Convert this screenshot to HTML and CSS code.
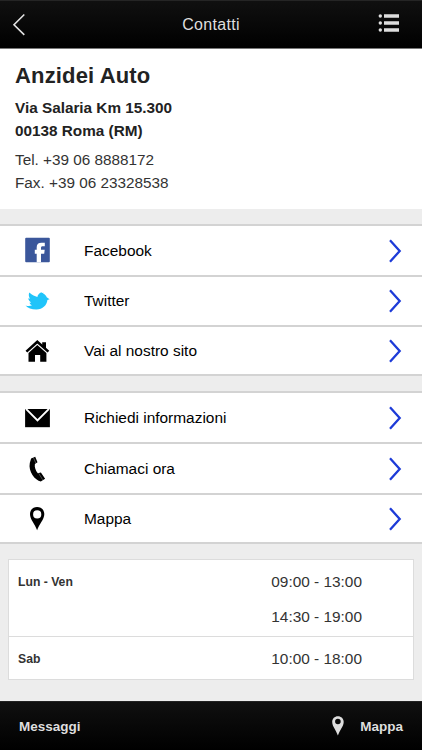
FILE: index.html
```html
<!DOCTYPE html>
<html lang="it">
<head>
<meta charset="utf-8">
<title>Contatti</title>
<link rel="stylesheet" href="styles.css">
</head>
<body>
<header class="bar top">
  <svg class="back" width="14" height="24" viewBox="0 0 14 24"><path d="M12.3 1.5 2 11.7 12.3 21.9"/></svg>
  <h1>Contatti</h1>
  <svg class="menu" width="22" height="20" viewBox="0 0 22 20"><circle cx="2.3" cy="3" r="1.7"/><circle cx="2.3" cy="10" r="1.7"/><circle cx="2.3" cy="17" r="1.7"/><path d="M6 1.2h15v3.5H6zM6 8.3h15v3.5H6zM6 15.3h15v3.5H6z"/></svg>
</header>
<section class="address">
  <h2>Anzidei Auto</h2>
  <p class="street"><span>Via Salaria Km 15.300</span><span>00138 Roma (RM)</span></p>
  <p class="phones"><span>Tel. +39 06 8888172</span><span>Fax. +39 06 23328538</span></p>
</section>
<nav class="group">
  <a class="row"><svg class="icon fb" viewBox="0 0 26 26"><rect x=".2" y=".7" width="24.6" height="24.6" rx="1" fill="#3b579b"/><path d="M11.7 25.3v-8.6H9.8v-3.9h1.9v-2.6c0-3.1 1.8-4.5 4.8-4.5h3.3v3.6h-2c-1.4 0-1.8.6-1.8 1.8v1.7h3.7l-.5 3.9H16v8.6z" fill="#fff"/></svg><span class="label">Facebook</span><svg class="arrow" viewBox="0 0 14 24"><path d="M2 1.2l9.7 10.8L2 22.8"/></svg></a>
  <a class="row mid"><svg class="icon" viewBox="0 0 26 26"><path d="M.5 17.4C3.4 18.6 5.2 18.1 7 17.3 5.4 16.8 5 16 4.5 14.8L6.2 14.5C4.4 13.4 3.4 11.9 3.3 10.3L5 10.7C3.8 9 3.4 6.7 4.3 4.6C7.3 7.2 9.8 8.2 12.4 9.1C12.6 7.2 14.2 5.1 16.5 4.3L17 5L18.5 4.7L18.2 5.8C20.2 6.5 21 7.7 21.7 9.2L24.6 11.2L22.4 12C22 16.9 17.8 21.5 11.3 21.5C6.6 21.5 2.8 20.2.5 17.4Z" fill="#20c4fa"/></svg><span class="label">Twitter</span><svg class="arrow" viewBox="0 0 14 24"><path d="M2 1.2l9.7 10.8L2 22.8"/></svg></a>
  <a class="row last"><svg class="icon" viewBox="0 0 26 26"><path d="M12.3 7.1l9.1 8v8.6h-6.2v-6.8h-5.2v6.8H3.5v-8.6z"/><path d="M1.4 13.6 12.3 3.7 23.4 13.6" fill="none" stroke="#000" stroke-width="2.6"/><path d="M17.2 4.2h3.8v7.5l-3.8-3.3z"/></svg><span class="label">Vai al nostro sito</span><svg class="arrow" viewBox="0 0 14 24"><path d="M2 1.2l9.7 10.8L2 22.8"/></svg></a>
</nav>
<nav class="group">
  <a class="row"><svg class="icon" viewBox="0 0 26 26"><path d="M.1 4h24.8v18.2H.1z"/><path d="M1 3.8 12.5 15.5 24 3.8" fill="none" stroke="#fff" stroke-width="1.9"/></svg><span class="label">Richiedi informazioni</span><svg class="arrow" viewBox="0 0 14 24"><path d="M2 1.2l9.7 10.8L2 22.8"/></svg></a>
  <a class="row"><svg class="icon" viewBox="0 0 26 26"><path d="M6.1 2.4 10.2.8 12.5 6.2 9.9 7.9C9.3 11 10.7 14.5 12.8 17.2L15.9 16.5 20.1 22.7 15.8 25.4C10 24.6 3 15.3 4.8 7Z"/><path d="M8.4 1.6 10.8 7.1M13.7 17.3 17.6 23.7" fill="none" stroke="#fff" stroke-width=".3"/></svg><span class="label">Chiamaci ora</span><svg class="arrow" viewBox="0 0 14 24"><path d="M2 1.2l9.7 10.8L2 22.8"/></svg></a>
  <a class="row last"><svg class="icon" viewBox="0 0 26 26"><path fill-rule="evenodd" d="M12.1.9C8 .9 5 4 5 8c0 5.6 4.9 9.7 7.1 16.3C14.3 17.7 19.3 13.6 19.3 8 19.3 4 16.3.9 12.1.9ZM12.2 4.3a4.1 4.1 0 1 1 0 8.2 4.1 4.1 0 0 1 0-8.2Z"/></svg><span class="label">Mappa</span><svg class="arrow" viewBox="0 0 14 24"><path d="M2 1.2l9.7 10.8L2 22.8"/></svg></a>
</nav>
<section class="hours">
  <div class="day week"><b>Lun - Ven</b><div class="times"><span>09:00 - 13:00</span><span>14:30 - 19:00</span></div></div>
  <div class="day"><b>Sab</b><div class="times"><span>10:00 - 18:00</span></div></div>
</section>
<footer class="bar bottom">
  <b>Messaggi</b>
  <span class="map-link"><svg width="12" height="20" viewBox="0 0 12 20"><path fill-rule="evenodd" d="M5.9.3C2.6.3.2 2.7.2 5.9c0 4.3 3.9 8 5.7 13.7C7.7 13.9 11.7 10.2 11.7 5.9 11.7 2.7 9.2.3 5.9.3ZM5.9 2.7a2.8 2.8 0 1 1 0 5.6 2.8 2.8 0 0 1 0-5.6Z"/></svg><b>Mappa</b></span>
</footer>
</body>
</html>
```
FILE: styles.css
```css
* { box-sizing: border-box; }
body { margin: 0; width: 422px; height: 750px; overflow: hidden; background: #ededed; font-family: "Liberation Sans", Arial, sans-serif; display: flex; flex-direction: column; color: #222; }
h1, h2, p { margin: 0; }
svg { flex: none; display: block; }
span, b { white-space: nowrap; }
.bar { display: flex; align-items: center; justify-content: space-between; background: linear-gradient(#101010, #000); color: #dedede; flex: none; }
.top { height: 49px; padding: 0 22px 0 12px; border-top: 1px solid #252525; border-bottom: 1px solid #777; }
.back { fill: none; stroke: #e2e2e2; stroke-width: 1.6; }
.menu { fill: #dedede; margin-top: -3px; }
h1 { font-size: 16px; font-weight: 400; letter-spacing: .3px; margin-left: 18px; }
.address { height: 160px; background: #fff; padding: 13px 15px 0; flex: none; }
h2 { font-size: 22px; line-height: 28px; color: #222; letter-spacing: .15px; }
.address span { display: block; font-size: 15.3px; line-height: 22.5px; }
.street { font-weight: 700; margin-top: 7px; }
.phones { margin-top: 7px; color: #333; }
.group { margin-top: 15px; border-top: 2px solid #d3d3d3; flex: none; }
.row { display: flex; align-items: center; height: 51px; padding: 0 20px 0 25px; background: #fff; border-bottom: 2px solid #d3d3d3; color: #000; font-size: 15.45px; }
.row.mid { height: 50px; }
.row.last { height: 49px; }
.icon { width: 26px; height: 26px; margin-right: 33px; }
.fb { margin-top: -2px; }
.label { flex: 1; }
.arrow { width: 14px; height: 24px; fill: none; stroke: #1d3bd8; stroke-width: 2.3; }
.hours { margin: 15px 8px 0; height: 121px; background: #fff; border: 1px solid #dcdcdc; flex: none; }
.day { display: flex; justify-content: space-between; padding: 4px 51px 0 9px; }
.week { height: 77px; border-bottom: 1px solid #dcdcdc; }
.day b { font-size: 12.2px; line-height: 37px; color: #333; }
.times span { display: block; font-size: 15.4px; line-height: 35px; color: #333; }
.bottom { margin-top: auto; height: 49px; padding: 0 19px; font-size: 13.5px; border-top: 1px solid #222; }
.map-link { display: flex; align-items: center; gap: 16px; }
.map-link svg { fill: #dedede; }
```
